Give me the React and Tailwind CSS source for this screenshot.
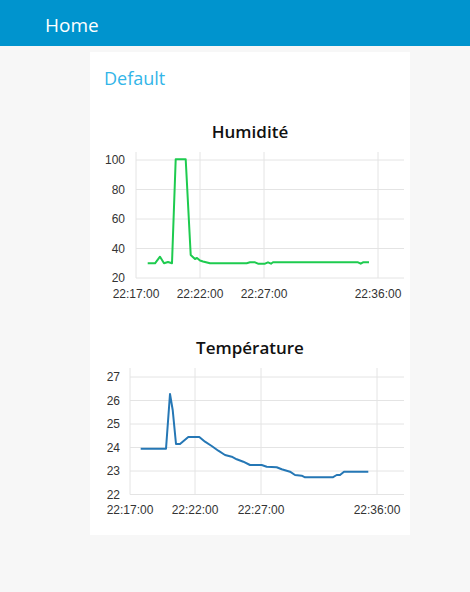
const humidity = [
  [57.7, 117.3], [65, 117.3], [70, 110.7], [74, 117.3], [78, 116], [82, 117.3],
  [85.7, 13.3], [95.7, 13.3], [100.7, 109], [105, 113], [107, 112], [110, 114.5],
  [113, 115.5], [120, 117.3], [156.7, 117.3], [160, 116.3], [165, 116.3], [168, 117.7],
  [175, 117.7], [178, 116.3], [181, 117.7], [183, 116.3], [268, 116.3], [270.7, 117.7],
  [273, 116.3], [279, 116.3],
];

const temperature = [
  [50.7, 86.7], [76, 86.7], [80, 32], [82.7, 48], [86, 82], [90, 82], [98.3, 75],
  [109.3, 75], [115, 79.7], [121.7, 84], [128.3, 88.7], [135, 93], [141.7, 94.7],
  [146.7, 97.3], [153.3, 99.7], [160, 103], [171.7, 103], [176.7, 104.7], [186.7, 105.3],
  [191.7, 107.3], [200, 109.7], [205, 113], [211.7, 113.7], [215, 115.3], [242.7, 115.3],
  [246.7, 113], [250, 113], [254, 109.7], [278.3, 109.7],
];

const Chart = ({ title, rows, cols, labelX, points, color }) => {
  const left = cols[0].x;
  return (
    <div className="flex flex-col">
      <div className="h-[28px] flex items-center justify-center text-[17px] font-semibold text-[#111]">
        {title}
      </div>
      <svg width="320" height="160" className="block">
        {rows.map((r) => (
          <line key={r.label} x1={left} x2="314" y1={r.y} y2={r.y} stroke="#e4e4e4" strokeWidth="1" />
        ))}
        {cols.map((c) => (
          <line key={c.label} x1={c.x} x2={c.x} y1="6" y2={rows[rows.length - 1].y} stroke="#e4e4e4" strokeWidth="1" />
        ))}
        {rows.map((r) => (
          <text
            key={r.label}
            x={labelX}
            y={r.y + 4}
            textAnchor="end"
            fontSize="12"
            fill="#333"
            fontFamily="'Liberation Sans', Arial, sans-serif"
          >
            {r.label}
          </text>
        ))}
        {cols.map((c) => (
          <text
            key={c.label}
            x={c.x}
            y="152"
            textAnchor="middle"
            fontSize="12"
            fill="#333"
            fontFamily="'Liberation Sans', Arial, sans-serif"
          >
            {c.label}
          </text>
        ))}
        <polyline
          points={points.map((p) => p.join(',')).join(' ')}
          fill="none"
          stroke={color}
          strokeWidth="2"
          strokeLinejoin="round"
        />
      </svg>
    </div>
  );
};

export default function App() {
  return (
    <div className="min-h-[592px] bg-[#f7f7f7] font-['Open_Sans',sans-serif]">
      <div className="h-[46px] bg-[#0094ce] flex items-center pl-[45px] pt-[4px] text-[19px] font-medium text-white">
        Home
      </div>
      <div className="pt-[6px] pl-[90px]">
        <div className="w-[320px] bg-white pb-[13px]">
          <div className="h-[52px] flex items-center pl-[14px] text-[18px] font-medium text-[#33b5e8]">
            Default
          </div>
          <div className="h-[14px]" />
          <Chart
            title="Humidité"
            labelX={35}
            rows={[
              { label: '100', y: 14 },
              { label: '80', y: 43.5 },
              { label: '60', y: 73 },
              { label: '40', y: 102.5 },
              { label: '20', y: 132 },
            ]}
            cols={[
              { label: '22:17:00', x: 46 },
              { label: '22:22:00', x: 110 },
              { label: '22:27:00', x: 174 },
              { label: '22:36:00', x: 288 },
            ]}
            points={humidity}
            color="#1ecb4f"
          />
          <div className="h-[28px]" />
          <Chart
            title="Température"
            labelX={30}
            rows={[
              { label: '27', y: 15 },
              { label: '26', y: 38.5 },
              { label: '25', y: 62 },
              { label: '24', y: 85.5 },
              { label: '23', y: 109 },
              { label: '22', y: 132.5 },
            ]}
            cols={[
              { label: '22:17:00', x: 40 },
              { label: '22:22:00', x: 105 },
              { label: '22:27:00', x: 171 },
              { label: '22:36:00', x: 287 },
            ]}
            points={temperature}
            color="#2577b5"
          />
        </div>
      </div>
    </div>
  );
}
